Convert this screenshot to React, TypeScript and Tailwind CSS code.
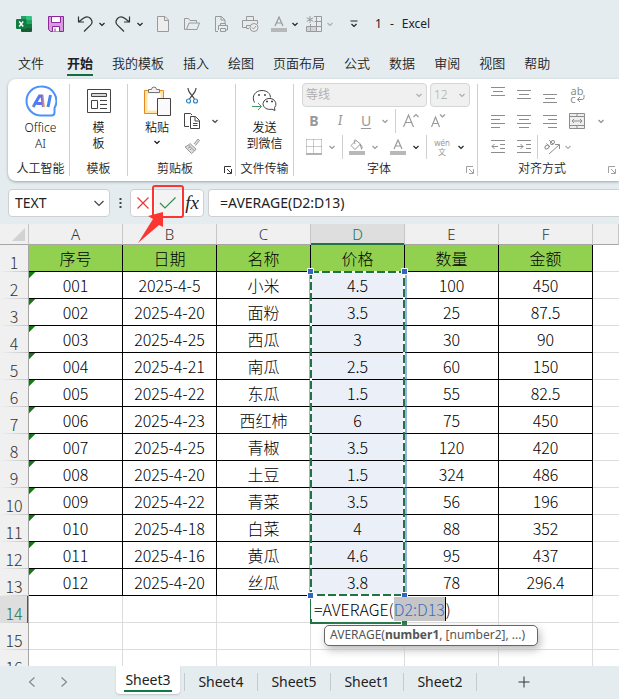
import type { ReactNode } from "react";
import { clsx } from "clsx";

const MENU = ["文件", "开始", "我的模板", "插入", "绘图", "页面布局", "公式", "数据", "审阅", "视图", "帮助"];
const COLUMNS = ["A", "B", "C", "D", "E", "F"];
const HEADINGS = ["序号", "日期", "名称", "价格", "数量", "金额"];
const ROWS = [
  ["001", "2025-4-5", "小米", "4.5", "100", "450"],
  ["002", "2025-4-20", "面粉", "3.5", "25", "87.5"],
  ["003", "2025-4-25", "西瓜", "3", "30", "90"],
  ["004", "2025-4-21", "南瓜", "2.5", "60", "150"],
  ["005", "2025-4-22", "东瓜", "1.5", "55", "82.5"],
  ["006", "2025-4-23", "西红柿", "6", "75", "450"],
  ["007", "2025-4-25", "青椒", "3.5", "120", "420"],
  ["008", "2025-4-20", "土豆", "1.5", "324", "486"],
  ["009", "2025-4-22", "青菜", "3.5", "56", "196"],
  ["010", "2025-4-18", "白菜", "4", "88", "352"],
  ["011", "2025-4-16", "黄瓜", "4.6", "95", "437"],
  ["012", "2025-4-20", "丝瓜", "3.8", "78", "296.4"],
];
const SHEETS = ["Sheet4", "Sheet5", "Sheet1", "Sheet2"];

type IconProps = { w?: number; h?: number; className?: string; children: ReactNode };

function Icon({ w = 16, h = 16, className, children }: IconProps) {
  return (
    <svg width={w} height={h} viewBox={`0 0 ${w} ${h}`} fill="none" stroke="currentColor" className={clsx("shrink-0", className)} aria-hidden="true">
      {children}
    </svg>
  );
}

function Chevron({ className }: { className?: string }) {
  return (
    <Icon w={8} h={8} className={className}>
      <path d="M1.500 3 4 5.500 6.500 3" strokeWidth="1.200" />
    </Icon>
  );
}

function Tool({ label, className, children }: { label: string; className?: string; children?: ReactNode }) {
  return (
    <button type="button" aria-label={label} className={clsx("flex shrink-0 items-center justify-center", className)}>
      {children}
    </button>
  );
}

function Divider() {
  return <span className="h-6 w-px shrink-0 bg-[#d0d0d0]" />;
}

function Launcher({ className }: { className?: string }) {
  return (
    <Tool label="更多选项" className={className}>
      <Icon w={8} h={8}>
        <path d="M.5 7V.5H7M3 3l4 4M7.500 3v4.500H3" />
      </Icon>
    </Tool>
  );
}

function TitleBar() {
  return (
    <header className="flex h-12 items-center pl-4 text-[#999]">
      <Icon className="mr-4">
        <g stroke="none">
          <path d="M5 0h5.500v4H5z" fill="#21a366" />
          <path d="M10 0h5a1 1 0 0 1 1 1v4h-6z" fill="#33c481" />
          <path d="M5 4h5.500v4H5z" fill="#107c41" />
          <path d="M10 4h6v4h-6z" fill="#21a366" />
          <path d="M5 8h5v8H6a1 1 0 0 1-1-1z" fill="#185c37" />
          <path d="M10 8h6v4h-6z" fill="#107c41" />
          <path d="M7 12h9v3a1 1 0 0 1-1 1H7z" fill="#185c37" />
          <rect y="3" width="10.500" height="10" rx="1" fill="#107c41" />
        </g>
        <path d="m3.200 5.500 4 5M7.200 5.500l-4 5" stroke="#fff" strokeWidth="1.400" />
      </Icon>
      <Tool label="保存" className="mr-3">
        <Icon>
          <path d="M.5.5h15v15H2.500L.5 13.500z" fill="#d99be0" stroke="#8d279c" />
          <path d="M3.500.5h9v6h-9zM4.500 15.500v-5h7v5M7 15.500v-3" fill="#fff" stroke="#8d279c" />
        </Icon>
      </Tool>
      <Tool label="撤消" className="text-[#333]">
        <Icon w={18} h={18}>
          <path d="M2.500 1.500V7H8M2.500 7 7 3.500C9.500 1.500 12.500 1.500 14.500 3.500c2 2.200 1.800 4.800 0 6.700L8 16.500" strokeWidth="1.200" />
        </Icon>
      </Tool>
      <Tool label="撤消列表" className="mr-2 ml-1 text-[#222]"><Chevron /></Tool>
      <Tool label="恢复" className="text-[#333]">
        <Icon w={18} h={18}>
          <path d="M15.500 1.500V7H10M15.500 7 11 3.500C8.500 1.500 5.500 1.500 3.500 3.500c-2 2.200-1.800 4.800 0 6.700L10 16.500" strokeWidth="1.200" />
        </Icon>
      </Tool>
      <Tool label="恢复列表" className="mr-3 ml-1 text-[#222]"><Chevron /></Tool>
      <Tool label="新建" className="mr-3">
        <Icon><path d="M1.500.5H9l3.500 3.500v11.500h-11zM8.500.5v4h4" fill="#ededed" /></Icon>
      </Tool>
      <Tool label="打开" className="mr-[14px]">
        <Icon><path d="M2.500 13.500h-2v-11h4l1.500 2h6.500v2M2.500 13.500l2.500-6.500h10.500L13 13.500z" /></Icon>
      </Tool>
      <Tool label="打印预览" className="mr-3">
        <Icon>
          <path d="M4 15.500H1.500V.5h6L11 4v3M7 .5V4h4M6.500 10V7.500h5V10M4.500 14v-4.500h9V14h-2M6.500 12.500h5v3h-5z" />
        </Icon>
      </Tool>
      <Tool label="快速打印" className="mr-3">
        <Icon w={17}>
          <path d="M4.500 5V.5h7V5M7 12.500H4.500v-3H8M4.500 11.500H.5v-7h15V8" />
          <circle cx="12" cy="11.500" r="4" fill="#ececec" />
          <path d="m10 11.500 1.500 1.500 2.500-3" />
        </Icon>
      </Tool>
      <Tool label="字体颜色"><FontColor /></Tool>
      <Tool label="字体颜色列表" className="mr-[7px] ml-1 text-[#222]"><Chevron /></Tool>
      <Tool label="表格">
        <Icon>
          <path d="M4.500 8v7.500h11V.5H8M15.500 5.500h-7M4.500 10.500h11M10.500 0v15.500M.5 10.500v5H5M.5 10.500H5" />
          <path d="M4 0v7M.8 1.800l6.400 3.500M7.200 1.800.8 5.300" />
          <path d="M1 11h9v4H1z" fill="#bbb" fillOpacity=".5" stroke="none" />
        </Icon>
      </Tool>
      <Tool label="表格列表" className="mr-4 ml-1 text-[#b0b0b0]"><Chevron /></Tool>
      <Tool label="自定义快速访问工具栏" className="mr-[17px] text-[#222]">
        <Icon w={8} h={8}><path d="M.5 1h7M1.500 4 4 6.500 6.500 4" strokeWidth="1.200" /></Icon>
      </Tool>
      <h1 className="flex gap-2 text-xs text-[#222]">
        <span>1</span><span>-</span><span>Excel</span>
      </h1>
    </header>
  );
}

function FontColor() {
  return (
    <Icon>
      <path d="m4 10 4-9 4 9M5.500 7h5" strokeWidth="1.200" />
      <path d="M0 12h16v4H0z" fill="#b8b8b8" stroke="none" />
    </Icon>
  );
}

function Menu() {
  return (
    <nav className="flex h-[31px] gap-[19px] pl-[18px] text-[13px] leading-5 text-[#222]">
      {MENU.map((name, i) => (
        <a
          key={name}
          href="#"
          className={clsx("mt-[5px] flex h-[23px] shrink-0 flex-col", i === 0 && "mr-1", i === 1 ? "border-b-2 border-[#0f703b] font-bold" : "font-[350]")}
        >
          {name}
        </a>
      ))}
    </nav>
  );
}

function Group({ label, className, launcher, launcherDark, children }: { label: string; className: string; launcher?: boolean; launcherDark?: boolean; children: ReactNode }) {
  return (
    <section className={clsx("my-[5px] flex shrink-0 flex-col border-r border-[#d0d0d0]", className)}>
      <div className="h-[78px]">{children}</div>
      <div className="flex h-[14px] items-center text-xs leading-[14px] text-[#222]">
        <h2 className="flex-1 text-center font-[350] whitespace-nowrap">{label}</h2>
        {launcher && <Launcher className={clsx("mt-0.5 mr-px w-3", launcherDark ? "text-[#333]" : "text-[#a0a0a0]")} />}
      </div>
    </section>
  );
}

function BigButton({ icon, lines }: { icon: ReactNode; lines: string[] }) {
  return (
    <button type="button" className="flex w-full flex-col items-center text-xs leading-4 font-[350] text-[#111]">
      <span className="mb-0.5 flex h-[34px] items-center justify-center">{icon}</span>
      {lines.map((line) => <span key={line}>{line}</span>)}
    </button>
  );
}

const AI_ICON = (
  <svg width="32" height="32" viewBox="0 0 32 32" fill="none" aria-hidden="true">
    <defs>
      <linearGradient id="ai" gradientUnits="userSpaceOnUse" x1="6" x2="27" y1="0" y2="0">
        <stop offset="0" stopColor="#f8b13c" />
        <stop offset=".15" stopColor="#3f83f5" />
        <stop offset=".5" stopColor="#6a6cf0" />
        <stop offset=".65" stopColor="#f0a75a" />
        <stop offset=".75" stopColor="#3f83f5" />
        <stop offset="1" stopColor="#4a8af5" />
      </linearGradient>
    </defs>
    <path d="M16 1.500a14.500 14.500 0 1 0 0 29h10.500q3 0 3-3V23A14.500 14.500 0 0 0 16 1.500Z" stroke="#4b93fb" strokeWidth="2" />
    <path d="m8 22 6.500-11h2.500l1.500 11M11.500 18.500h6.500M25.500 10l-2.500 12" stroke="url(#ai)" strokeWidth="3" />
  </svg>
);

const TEMPLATE_ICON = (
  <Icon w={24} h={24} className="text-[#444]">
    <path d="M.5.500h23v23H.5z" fill="#fff" />
    <path d="M4.500 4.500h15v3h-15z" fill="#d8d8d8" />
    <path d="M4.500 11.500h6v8h-6zM13 11.500h7M13 15.500h7M13 19.500h7" />
  </Icon>
);

const WECHAT_ICON = (
  <Icon w={26} h={24} className="text-[#444]">
    <path d="M2.500 13.500C-1 7 3.500 1.500 10 1.500c5 0 8.500 3 8.500 7" />
    <path d="M11 14.500a6.500 5.700 0 1 1 11.500 4.200l.5 2.800-3-1.300c-5 1-9-1.700-9-5.700Z" fill="#fff" />
    <path d="M6 6h2M12 6h2M14 12.500h2M19 12.500h2" strokeWidth="1.600" />
    <path d="M0 17.500h9M6 14l3.500 3.500L6 21" stroke="#3f9a5d" />
  </Icon>
);

function ClipboardTools() {
  return (
    <div className="flex pl-4">
      <button type="button" className="flex w-[26px] flex-col items-center text-xs leading-4 font-[350] whitespace-nowrap text-[#111]">
        <span className="mb-0.5 flex h-[34px] items-center">
          <Icon w={28} h={32} className="text-[#444]">
            <path d="M1.500 5.500h19v23h-19z" fill="#ffe6a6" stroke="#e6891e" />
            <path d="M4.500 8.500h13v17h-13z" fill="#fff" stroke="none" />
            <path d="M5.500 7.500v-3h3a2.500 2.500 0 0 1 5 0h3v3z" fill="#f2f2f2" stroke="#777" />
            <path d="M14.500 13.500h13v17h-13z" fill="#fafafa" />
          </Icon>
        </span>
        粘贴
        <Chevron className="mt-0.5" />
      </button>
      <div className="ml-[14px] flex flex-col gap-2 pt-1">
        <Tool label="剪切" className="h-4 w-4 text-[#444]">
          <Icon>
            <path d="M4 0c0 4 3 6 6.500 11M12 0c0 4-3 6-6.500 11" strokeWidth="1.200" />
            <circle cx="4.500" cy="13" r="2" stroke="#2b88c8" strokeWidth="1.200" />
            <circle cx="11.500" cy="13" r="2" stroke="#2b88c8" strokeWidth="1.200" />
          </Icon>
        </Tool>
        <div className="mt-px flex items-center gap-[11px] text-[#444]">
          <Tool label="复制" className="h-4 w-4">
            <Icon><path d="M5 13.500H.500V.500h6L8 2M6.500 3.500h5l4 4v8h-9zM11 4v4h4M9 10.500h4.500M9 12.500h4.500" /></Icon>
          </Tool>
          <Tool label="复制选项"><Chevron /></Tool>
        </div>
        <Tool label="格式刷" className="mt-px h-4 w-4 text-[#999]">
          <Icon>
            <path d="m10 6 4-5 1.500 1.500-4 5M6 5.500l6 5.500-1.500 2-6-6zM4.500 7 1 9l6.500 6.500 3-2.500M4 10l2-1M6 12l1.500-1.500" fill="#ddd" />
          </Icon>
        </Tool>
      </div>
    </div>
  );
}

function GreySelect({ label, value, className }: { label: string; value: string; className: string }) {
  return (
    <span className={clsx("grid items-center text-[#adadad]", className)}>
      <select aria-label={label} className="col-start-1 row-start-1 h-6 w-full appearance-none rounded border border-[#d6d6d6] bg-[#f0f0f0] pl-[3px] text-xs leading-4 font-[350]">
        <option>{value}</option>
      </select>
      <Chevron className="pointer-events-none col-start-1 row-start-1 mr-1 justify-self-end" />
    </span>
  );
}

function FontTools() {
  return (
    <div className="flex flex-col pl-2 text-[#999]">
      <div className="-mt-px flex gap-[3px]">
        <GreySelect label="字体名称" value="等线" className="w-[125px]" />
        <GreySelect label="字号" value="12" className="w-10" />
      </div>
      <div className="mt-[2px] flex h-6 items-center text-sm">
        <Tool label="加粗" className="w-6 font-bold">B</Tool>
        <Tool label="倾斜" className="ml-0.5 w-6 font-serif italic">I</Tool>
        <Tool label="下划线" className="ml-0.5 w-6 underline underline-offset-2">U</Tool>
        <Tool label="下划线样式" className="mr-[5px] ml-0.5 w-2.5"><Chevron /></Tool>
        <Divider />
        <Tool label="增大字号" className="ml-[7px] w-4">
          <Icon><path d="m.5 14 5-12 5 12M2.500 9.500h6M10.500 4 13 1.500 15.500 4" strokeWidth="1.200" /></Icon>
        </Tool>
        <Tool label="减小字号" className="ml-3 w-4">
          <Icon><path d="m.5 14 4-10 4 10M2 10.500h5M9 1.500 11.500 4 14 1.500" strokeWidth="1.200" /></Icon>
        </Tool>
      </div>
      <div className="mt-[2px] flex h-6 items-center">
        <Tool label="边框" className="mr-[6px] ml-1">
          <Icon>
            <path d="M.5.5h15M.5 7.500h15M.5.500v14M7.500.500v14M15.500.500v14" strokeDasharray="1 1" />
            <path d="M0 15h16" strokeWidth="1.500" />
          </Icon>
        </Tool>
        <Tool label="边框列表" className="mr-[6px]"><Chevron /></Tool>
        <Divider />
        <Tool label="填充颜色" className="mx-[6px]">
          <Icon>
            <path d="M7 1.500 2 6.500l4 4 5.500-5.500zM7 1.500c-2-1.500-2 0-1 3.500M11 5l1.500 5M12.500 10.500c1-2 1-4-1.500-5.500" />
            <path d="M0 12h16v4H0z" fill="#b8b8b8" stroke="none" />
          </Icon>
        </Tool>
        <Tool label="填充颜色列表" className="mr-[11px]"><Chevron /></Tool>
        <Tool label="字体颜色" className="mr-[6px]"><FontColor /></Tool>
        <Tool label="字体颜色列表" className="mr-[6px] text-[#222]"><Chevron /></Tool>
        <Divider />
        <Tool label="拼音" className="mx-[7px] w-4 flex-col text-[8px] leading-[9px] whitespace-nowrap">
          <span>wén</span>
          <span>文</span>
        </Tool>
        <Tool label="拼音列表" className="text-[#222]"><Chevron /></Tool>
      </div>
    </div>
  );
}

function AlignTools() {
  return (
    <div className="flex flex-col gap-[2px] pl-[13px] text-[#8d8d8d]">
      <div className="-mt-px flex h-6 items-center gap-3">
        <Tool label="顶端对齐"><Icon w={14}><path d="M0 .5h14M2 4.500h10M0 8.500h14" /></Icon></Tool>
        <Tool label="垂直居中"><Icon w={14}><path d="M0 3.500h14M2 7.500h10M0 11.500h14" /></Icon></Tool>
        <Tool label="底端对齐"><Icon w={14}><path d="M0 7.500h14M2 11.500h10M0 15.500h14" /></Icon></Tool>
        <Tool label="自动换行" className="w-4">
          <span className="grid grid-cols-2 text-[11px] leading-[8px]">
            <span className="col-span-2">ab</span>
            <span>c</span>
            <Icon w={8} h={8}><path d="M7 0v2.500q0 2-2 2H.5M3 2 .5 4.500 3 7" /></Icon>
          </span>
        </Tool>
      </div>
      <div className="flex h-6 items-center gap-3">
        <Tool label="左对齐"><Icon w={14}><path d="M0 2.500h14M0 6.500h9M0 10.500h14M0 14.500h9" /></Icon></Tool>
        <Tool label="居中"><Icon w={14}><path d="M0 2.500h14M2 6.500h10M0 10.500h14M2 14.500h10" /></Icon></Tool>
        <Tool label="右对齐"><Icon w={14}><path d="M0 2.500h14M5 6.500h9M0 10.500h14M5 14.500h9" /></Icon></Tool>
        <Tool label="合并后居中">
          <Icon>
            <path d="M.5.500h15v15H.500zM.5 3.500h15M.5 12.500h15M8 .5v3M8 12.500v3M3 8h10M5 6 3 8l2 2M11 6l2 2-2 2" fill="#eee" />
          </Icon>
        </Tool>
        <Tool label="合并列表"><Chevron /></Tool>
      </div>
      <div className="flex h-6 items-center">
        <Tool label="减少缩进" className="mr-3"><Icon w={14}><path d="M0 1.500h14M9 5.500h5M9 9.500h5M0 13.500h14M1 7.500h6M3.500 5 1 7.500 3.500 10" /></Icon></Tool>
        <Tool label="增加缩进" className="mr-[6px]"><Icon w={14}><path d="M0 1.500h14M9 5.500h5M9 9.500h5M0 13.500h14M0 7.500h6M3.500 5 6 7.500 3.500 10" /></Icon></Tool>
        <Divider />
        <Tool label="方向" className="mr-1 ml-[6px]">
          <Icon>
            <ellipse cx="3" cy="8" rx="2.200" ry="1.700" transform="rotate(-45 3 8)" />
            <path d="M2.500 4.500 6 8M5 1l4 4" />
            <ellipse cx="8.500" cy="3.500" rx="2.200" ry="1.700" transform="rotate(-45 8.500 3.500)" />
            <path d="m5 15 10-9M11 5.500h4.500V10" />
          </Icon>
        </Tool>
        <Tool label="方向列表" className="text-[#adadad]"><Chevron /></Tool>
      </div>
    </div>
  );
}

function Ribbon() {
  return (
    <div className="ml-2 flex h-[102px] overflow-hidden rounded-l-lg bg-white shadow-[0_1px_3px_#9aa5aa]">
      <Group label="人工智能" className="w-[62px] pl-1"><BigButton icon={AI_ICON} lines={["Office", "AI"]} /></Group>
      <Group label="模板" className="w-[58px]"><BigButton icon={TEMPLATE_ICON} lines={["模", "板"]} /></Group>
      <Group label="剪贴板" className="w-[108px]" launcher launcherDark><ClipboardTools /></Group>
      <Group label="文件传输" className="w-[58px]"><BigButton icon={WECHAT_ICON} lines={["发送", "到微信"]} /></Group>
      <Group label="字体" className="w-[184px]" launcher><FontTools /></Group>
      <Group label="对齐方式" className="w-[142px]" launcher><AlignTools /></Group>
    </div>
  );
}

function FormulaBar() {
  return (
    <div className="relative flex h-[43px] items-center pl-2">
      <label className="flex h-7 w-[102px] shrink-0 items-center rounded border border-[#d0d0d0] bg-white pr-[5px] pl-[6px]">
        <input aria-label="名称框" defaultValue="TEXT" className="w-full min-w-0 text-sm text-[#222] outline-none" />
        <Icon w={10} h={10} className="text-[#444]"><path d="m.5 3 4.500 4.500L9.500 3" strokeWidth="1.200" /></Icon>
      </label>
      <Icon w={3} h={12} className="mr-2 ml-[9px]"><path d="M1.500 1v2M1.500 5v2M1.500 9v2" stroke="#444" strokeWidth="2" /></Icon>
      <div className="flex h-7 w-[74px] shrink-0 items-center rounded border border-[#d0d0d0] bg-white">
        <Tool label="取消" className="h-full w-6 text-[#e53935]">
          <Icon w={14} h={14}><path d="m1.500 1.500 11 11M12.500 1.500l-11 11" strokeWidth="1.200" /></Icon>
        </Tool>
        <Tool label="输入" className="h-full w-[26px] rounded bg-[#f3f3f3] text-[#2f8f4e]">
          <Icon w={18} h={14}><path d="m1 7 5 5L16.500 1.500" strokeWidth="1.200" /></Icon>
        </Tool>
        <Tool label="插入函数" className="h-full w-[22px] font-['Liberation_Serif',serif] text-[19px] leading-5 text-[#222] italic">fx</Tool>
      </div>
      <input aria-label="编辑栏" defaultValue="=AVERAGE(D2:D13)" className="ml-1 h-7 min-w-0 flex-1 rounded-l border border-r-0 border-[#d0d0d0] bg-white pl-[11px] text-sm text-[#222] outline-none" />
      <svg width="54" height="62" viewBox="0 0 54 62" className="pointer-events-none absolute top-[2px] left-[134px] z-20" fill="none" aria-hidden="true">
        <rect x="19" y="3" width="30" height="31" rx="2" stroke="#fa3532" strokeWidth="2" />
        <path d="M4 60 19 36l-5-3 15-4 0 15-4-2z" fill="#fa3532" />
      </svg>
    </div>
  );
}

function GridSheet() {
  const letter = "border-r border-[#c6c6c6] border-b border-b-[#a6a6a6] p-0 font-['Noto_Sans',sans-serif] text-[15px] leading-5 font-light";
  const side = "h-[27px] border-r border-[#a6a6a6] p-0 pt-[7px] text-base leading-5 font-light bg-[linear-gradient(to_right,transparent,#c4c4c4)] bg-[length:100%_1px] bg-bottom bg-no-repeat";
  return (
    <main className="relative min-h-0 flex-1 overflow-hidden bg-white font-['Noto_Sans_CJK_SC',sans-serif] text-black">
      <table className="w-full table-fixed border-separate border-spacing-0 text-center">
        <colgroup>
          <col className="w-[29px]" />
          {COLUMNS.map((c) => <col key={c} className="w-[94px]" />)}
          <col />
        </colgroup>
        <thead>
          <tr className="h-[21px] bg-[#f0f0f0] text-[#333]">
            <th className={letter}>
              <Icon w={13} h={13} className="ml-3 block"><path d="M13 0v13H0z" fill="#d2d2d2" stroke="none" /></Icon>
            </th>
            {COLUMNS.map((c) => (
              <th key={c} scope="col" className={clsx(letter, c === "D" && "border-b-[#217346]! bg-[#dedede] text-[#217346] shadow-[inset_0_-1px_#217346]")}>{c}</th>
            ))}
            <th className={letter} />
          </tr>
        </thead>
        <tbody>
          <tr>
            <th scope="row" className={clsx(side, "bg-[#f0f0f0] text-[#333]")}>1</th>
            {HEADINGS.map((h) => (
              <th key={h} scope="col" className="border-r border-b border-black bg-[#92d050] p-0 text-base leading-5 font-light">{h}</th>
            ))}
            <td className="border-b border-[#dcdcdc]" />
          </tr>
          {ROWS.map((row, r) => (
            <tr key={row[0]}>
              <th scope="row" className={clsx(side, "bg-[#f0f0f0] text-[#333]")}>{r + 2}</th>
              {row.map((value, c) => (
                <td
                  key={c}
                  className={clsx(
                    "border-r border-b border-black p-0 text-base leading-5 font-light",
                    c === 0 && "bg-[linear-gradient(135deg,#107c10_4px,transparent_5px)]",
                    c === 3 && "bg-[#eaeff8]",
                  )}
                >
                  {value}
                </td>
              ))}
              <td className="border-b border-[#dcdcdc]" />
            </tr>
          ))}
          {[14, 15, 16].map((n) => (
            <tr key={n}>
              <th scope="row" className={clsx(side, n === 14 ? "bg-[#dedede] text-[#217346] shadow-[inset_-1px_0_#217346]" : "bg-[#f0f0f0] text-[#333]")}>{n}</th>
              {COLUMNS.map((c) => (
                <td key={c} className={clsx("border-b border-[#dcdcdc] p-0 text-left text-base leading-5 font-light", !(n === 14 && c === "D") && "border-r")}>
                  {n === 14 && c === "D" && (
                    <div className="relative z-10 w-max bg-white pl-[3px]">
                      =AVERAGE(<mark className="border-r border-black bg-[#c6c6c6] text-[#3c6cc4]">D2:D13</mark>)
                    </div>
                  )}
                </td>
              ))}
              <td className="border-b border-[#dcdcdc]" />
            </tr>
          ))}
        </tbody>
      </table>
      <svg width="104" height="360" viewBox="0 0 104 360" className="pointer-events-none absolute top-[43px] left-[306px]" fill="none" aria-hidden="true">
        <path d="M5 329v27h90" stroke="#217346" strokeWidth="2" />
        <path d="M96 354h5v4h-5z" fill="#217346" />
        <path d="M4 4.500h96v324H4z" stroke="#2f66c4" />
        <path d="M5 5h93v323H5z" stroke="#fff" strokeWidth="2" />
        <path d="M5 5h93v323H5z" stroke="#217346" strokeWidth="2" strokeDasharray="8 3" />
        <g fill="#2f66c4" stroke="#fff">
          <path d="M1.500 1.500h6v6h-6zM95.500 1.500h6v6h-6zM1.500 325.500h6v6h-6zM95.500 325.500h6v6h-6z" />
        </g>
      </svg>
      <div role="tooltip" className="absolute top-[401px] left-[324px] h-[21px] w-[214px] rounded-[5px] border border-[#666] bg-white pl-[5px] font-['Noto_Sans',sans-serif] text-xs leading-[17px] whitespace-nowrap text-[#555] shadow-[2px_4px_8px_#bbb]">
        AVERAGE(<b>number1</b>, [number2], ...)
      </div>
    </main>
  );
}

function SheetTabs() {
  return (
    <footer className="flex h-[33px] shrink-0 items-start text-sm text-[#222]">
      <Tool label="上一张" className="ml-4 h-[31px] w-8 text-[#888]"><Icon w={8} h={12}><path d="M6.500 1.500 1.500 6l5 4.500" strokeWidth="1.200" /></Icon></Tool>
      <Tool label="下一张" className="mr-9 h-[31px] w-8 text-[#888]"><Icon w={8} h={12}><path d="m1.500 1.500 5 4.500-5 4.500" strokeWidth="1.200" /></Icon></Tool>
      <button type="button" className="h-7 w-16 rounded-b bg-white px-2 shadow-[0_1px_2px_#bcc4c8]">
        <span className="block h-6 border-b-2 border-[#107c41] text-center leading-6">Sheet3</span>
      </button>
      <span className="mt-[7px] ml-1 h-[18px] w-px bg-[#c4cacd]" />
      {SHEETS.map((name) => (
        <span key={name} className="flex items-center">
          <button type="button" className="h-[31px] w-[72px] leading-[30px]">{name}</button>
          <span className="h-[18px] w-px bg-[#c4cacd]" />
        </span>
      ))}
      <Tool label="新工作表" className="ml-[31px] h-[31px] w-8 text-[#333]"><Icon w={12} h={12}><path d="M6 .5v11M.5 6h11" /></Icon></Tool>
    </footer>
  );
}

export default function App() {
  return (
    <div className="flex h-screen flex-col overflow-hidden bg-[#e4ecef] font-['Noto_Sans','Noto_Sans_CJK_SC',sans-serif]">
      <TitleBar />
      <Menu />
      <Ribbon />
      <FormulaBar />
      <GridSheet />
      <SheetTabs />
    </div>
  );
}
